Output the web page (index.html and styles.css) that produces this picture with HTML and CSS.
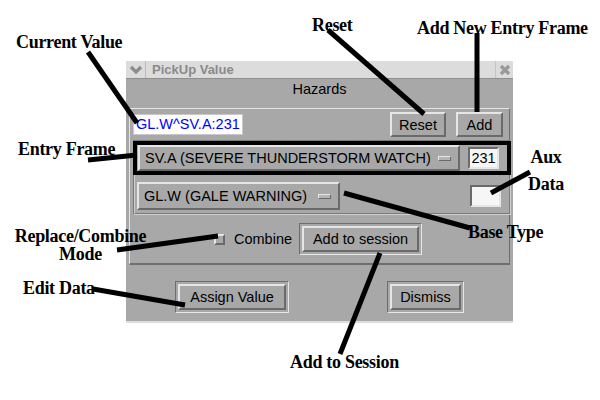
FILE: index.html
```html
<!DOCTYPE html>
<html lang="en">

<head>
    <meta charset="UTF-8">
    <title>PickUp Value</title>
    <link rel="stylesheet" href="styles.css">
</head>

<body>
    <div class="stage">
        <div class="window">
            <div class="titlebar">
                <div class="tb-menu">
                    <svg width="14" height="10" viewBox="0 0 14 10">
                        <path d="M2 2 L7 7 L12 2" fill="none" stroke="#8c8c8c" stroke-width="3.2" />
                    </svg>
                </div>
                <div class="tb-title">PickUp Value</div>
                <div class="tb-close">
                    <svg width="12" height="12" viewBox="0 0 12 12">
                        <path d="M2 2 L10 10 M10 2 L2 10" stroke="#9a9a9a" stroke-width="3.4" />
                    </svg>
                </div>
            </div>

            <div class="header">Hazards</div>

            <div class="frame">
                <div class="top-row">
                    <div class="value-field">GL.W^SV.A:231</div>
                    <button class="btn btn-reset">Reset</button>
                    <button class="btn btn-add">Add</button>
                </div>

                <div class="entries">
                    <div class="entry-row">
                        <div class="option option-wide">SV.A (SEVERE THUNDERSTORM WATCH)<span class="ind"></span></div>
                        <div class="small-field">231</div>
                    </div>
                    <div class="base-row">
                        <div class="option option-base">GL.W (GALE WARNING)<span class="ind"></span></div>
                        <div class="small-field aux"></div>
                    </div>
                </div>

                <div class="combine-row">
                    <span class="check"></span>
                    <span class="check-label">Combine</span>
                    <div class="ring">
                        <button class="btn btn-session">Add to session</button>
                    </div>
                </div>
            </div>

            <div class="actions">
                <div class="ring">
                    <button class="btn btn-assign">Assign Value</button>
                </div>
                <div class="ring">
                    <button class="btn btn-dismiss">Dismiss</button>
                </div>
            </div>
        </div>

        <!-- notas por cima da janela -->
        <svg class="pointers" width="600" height="400" viewBox="0 0 600 400">
            <g stroke="#000" stroke-width="5" fill="none">
                <path d="M88 52 L137 123" />
                <path d="M328 30 L424 114" />
                <path d="M477 33 L477 112" />
                <path d="M88 160 L137 155" />
                <path d="M530 172 L491 193" />
                <path d="M344 193 L470 228" />
                <path d="M117 250 L218 236" />
                <path d="M93 289 L185 305" />
                <path d="M340 354 L380 253" />
            </g>
        </svg>

        <div class="note note-current">Current Value</div>
        <div class="note note-reset">Reset</div>
        <div class="note note-add">Add New Entry Frame</div>
        <div class="note note-entry">Entry Frame</div>
        <div class="note note-aux">Aux<br>Data</div>
        <div class="note note-base">Base Type</div>
        <div class="note note-mode">Replace/Combine<br>Mode</div>
        <div class="note note-edit">Edit Data</div>
        <div class="note note-session">Add to Session</div>
    </div>
</body>

</html>
```

FILE: styles.css
```css
* {
    box-sizing: border-box;
}

body {
    margin: 0;
    background-color: #ffffff;
    font-family: "Liberation Sans", Arial, sans-serif;
    font-size: 14.5px;
    color: #000000;
}

.stage {
    position: relative;
    width: 600px;
    height: 400px;
    overflow: hidden;
    padding-top: 61px;
    padding-left: 126px;
}

.window {
    width: 387px;
    height: 262px;
    background-color: #a8a8a8;
    display: flex;
    flex-direction: column;
    border-bottom: 2px solid #dedede;
}

/* barra de titulo */
.titlebar {
    height: 18px;
    display: flex;
    background-color: #dcdcdc;
    border-bottom: 1px solid #8e8e8e;
}

.tb-menu {
    width: 20px;
    display: flex;
    align-items: center;
    justify-content: center;
    border-right: 1px solid #bcbcbc;
}

.tb-title {
    flex: 1;
    padding-left: 6px;
    font-weight: bold;
    font-size: 13px;
    line-height: 17px;
    color: #8a8a8a;
}

.tb-close {
    width: 18px;
    display: flex;
    align-items: center;
    justify-content: center;
    border-left: 1px solid #c4c4c4;
}

.header {
    height: 29px;
    padding-top: 2px;
    line-height: 17px;
    text-align: center;
}

.frame {
    margin: 0 3px;
    padding: 0 6px 8px 3px;
    border-top: 1px solid #e4e4e4;
    border-left: 1px solid #e4e4e4;
    border-right: 1px solid #6e6e6e;
    border-bottom: 2px solid #6e6e6e;
}

.top-row {
    display: flex;
    align-items: center;
    margin-top: 3px;
    height: 25px;
}

.value-field {
    width: 110px;
    height: 21px;
    margin-right: auto;
    padding-left: 2px;
    line-height: 19px;
    color: #0000ff;
    background-color: #ffffff;
    border: 1px solid #c8c8c8;
}

.btn {
    font-family: "Liberation Sans", Arial, sans-serif;
    font-size: 14.5px;
    color: #000000;
    background-color: #a8a8a8;
    border: 2px solid;
    border-color: #e6e6e6 #6a6a6a #6a6a6a #e6e6e6;
    padding: 0;
    margin: 0;
    display: block;
}

.btn-reset {
    width: 56px;
    height: 25px;
}

.btn-add {
    width: 47px;
    height: 25px;
    margin-left: 10px;
}

.ring {
    padding: 2px;
    border: 1px solid;
    border-color: #6e6e6e #e6e6e6 #e6e6e6 #6e6e6e;
}

.btn-session {
    width: 117px;
    height: 26px;
}

.btn-assign {
    width: 108px;
    height: 26px;
}

.btn-dismiss {
    width: 71px;
    height: 26px;
}

/* frames de entrada */
.entries {
    margin-top: 3px;
    margin-right: -8px;
    padding-bottom: 3px;
    border: 2px groove #cfcfcf;
}

.entry-row {
    display: flex;
    align-items: center;
    height: 34px;
    margin: -1px -2px 0 -2px;
    border: 4px solid #000000;
}

.option {
    display: flex;
    align-items: center;
    padding: 0 7px 0 5px;
    background-color: #a8a8a8;
    border: 2px solid;
    border-color: #e6e6e6 #6a6a6a #6a6a6a #e6e6e6;
    white-space: nowrap;
}

.option-wide {
    width: 322px;
    height: 26px;
    margin-left: 1px;
}

.option-base {
    width: 203px;
    height: 28px;
    margin-left: 2px;
}

.ind {
    width: 13px;
    height: 5px;
    margin-left: auto;
    background-color: #b4b4b4;
    border: 1px solid;
    border-color: #e6e6e6 #6a6a6a #6a6a6a #e6e6e6;
}

.small-field {
    width: 31px;
    height: 22px;
    margin-left: auto;
    margin-right: 8px;
    text-align: center;
    line-height: 18px;
    background-color: #f6f6f6;
    border: 2px solid;
    border-color: #6a6a6a #e6e6e6 #e6e6e6 #6a6a6a;
}

.base-row {
    display: flex;
    align-items: center;
    margin-top: 7px;
}

.aux {
    margin-right: 8px;
}

.combine-row {
    display: flex;
    align-items: center;
    justify-content: center;
    margin-top: 8px;
    height: 32px;
}

.check {
    width: 11px;
    height: 11px;
    background-color: #a8a8a8;
    border: 2px solid;
    border-color: #e6e6e6 #6a6a6a #6a6a6a #e6e6e6;
}

.check-label {
    margin-left: 9px;
    margin-right: 7px;
}

.actions {
    flex: 1;
    display: flex;
    justify-content: space-around;
    align-items: flex-start;
    padding-top: 16px;
}

/* anotacoes */
.pointers {
    position: absolute;
    left: 0;
    top: 0;
}

.note {
    position: absolute;
    font-family: "Liberation Serif", "Times New Roman", serif;
    font-weight: bold;
    font-size: 18px;
    line-height: 15px;
    letter-spacing: -0.3px;
    white-space: nowrap;
}

.note-current {
    left: 16px;
    top: 35px;
}

.note-reset {
    left: 312px;
    top: 18px;
}

.note-add {
    left: 417px;
    top: 21px;
}

.note-entry {
    left: 18px;
    top: 142px;
}

.note-aux {
    left: 526px;
    top: 144px;
    width: 40px;
    text-align: center;
    line-height: 27px;
}

.note-base {
    left: 468px;
    top: 225px;
}

.note-mode {
    left: 13px;
    top: 227px;
    width: 135px;
    text-align: center;
    line-height: 18px;
}

.note-edit {
    left: 23px;
    top: 281px;
}

.note-session {
    left: 290px;
    top: 355px;
}
```
